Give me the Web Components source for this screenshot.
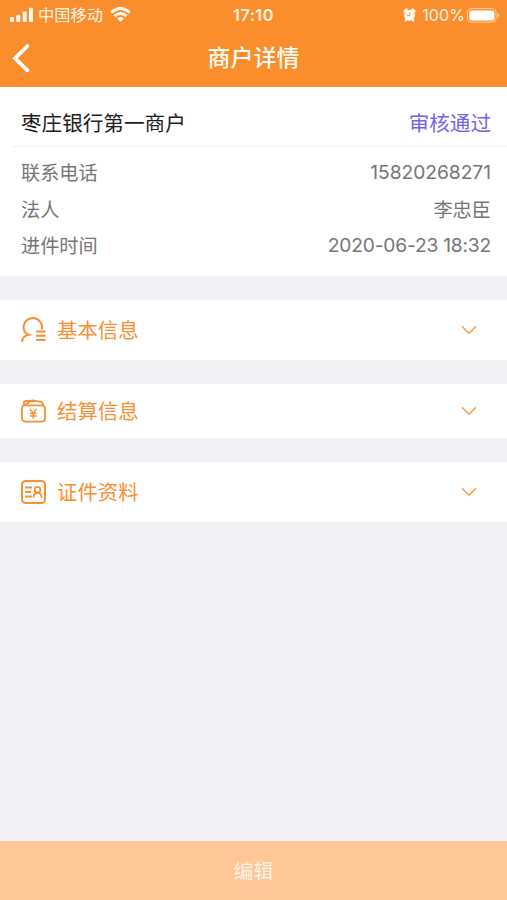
<!DOCTYPE html>
<html lang="zh-CN">
<head>
<meta charset="utf-8">
<title>商户详情</title>
<style>
html, body { margin: 0; height: 100%; }
body { font-family: Inter, "Noto Sans CJK SC", sans-serif; background: #f0f0f5; }
</style>
</head>
<body>
<merchant-page></merchant-page>
<script>
function define(name, html) {
  const template = document.createElement('template');
  template.innerHTML = html;
  customElements.define(name, class extends HTMLElement {
    constructor() {
      super();
      this.attachShadow({ mode: 'open' }).append(template.content.cloneNode(true));
    }
  });
}

define('status-bar', `
<style>
:host { display: grid; grid-template-columns: 1fr auto 1fr; align-items: center; height: 30px; color: #fff3e6; font-size: 16px; line-height: 30px; }
.side { display: flex; align-items: center; }
.left { padding-left: 10px; }
.right { justify-content: flex-end; padding-right: 7px; }
.carrier { margin: 0 7px 0 4px; font-size: 16.3px; white-space: nowrap; }
.time { font-weight: 600; font-size: 16.3px; letter-spacing: .45px; }
.pct { margin: 0 2px 0 6px; font-size: 16px; letter-spacing: .1px; }
svg { display: block; flex: none; }
</style>
<div class="side left">
  <svg width="24" height="16" viewBox="0 0 24 16" fill="#fff8ef"><rect x="0" y="10" width="4" height="5" rx="1"/><rect x="6.3" y="8" width="4" height="7" rx="1"/><rect x="12.7" y="4.5" width="4" height="10.5" rx="1"/><rect x="19" y="0.8" width="4" height="14.2" rx="1"/></svg>
  <span class="carrier">中国移动</span>
  <svg width="21" height="16" viewBox="0 0 21 16" fill="none" stroke="#fff8ef" stroke-width="2.9"><path d="M1.2 5.6Q10.5-2.6 19.8 5.6M4.6 9.2Q10.5 4 16.4 9.2"/><path d="M7.1 11.4Q10.5 8.5 13.9 11.4L10.5 15Z" fill="#fff8ef" stroke="none"/></svg>
</div>
<span class="time">17:10</span>
<div class="side right">
  <svg width="13" height="14" viewBox="0 0 13 14"><g stroke="#fff8ef" stroke-linecap="round"><path d="M1.8 3.2 3.4 1.8M9.6 1.8 11.2 3.2" stroke-width="2.8"/><path d="M2.6 12.6 3.8 11.2M10.4 12.6 9.2 11.2" stroke-width="1.8"/></g><circle cx="6.5" cy="7.3" r="5.5" fill="#fff8ef"/><path d="M6.8 4.4V7.6H4" fill="none" stroke="#fb8e2c" stroke-width=".9"/></svg>
  <span class="pct">100%</span>
  <svg width="33" height="15" viewBox="0 0 33 15"><rect x=".6" y=".6" width="28.5" height="13.5" rx="3.5" fill="none" stroke="#ffd0a0" stroke-width="1"/><rect x="2.4" y="2.4" width="25" height="10" rx="2" fill="#fff"/><path d="M30.5 5v5q1.7-.8 1.7-2.5T30.5 5Z" fill="#ffd0a0"/></svg>
</div>`);

define('nav-bar', `
<style>
:host { display: grid; grid-template-columns: 1fr auto 1fr; align-items: center; height: 57px; color: #fffaf2; }
svg { display: block; margin: -1px 0 0 11px; }
h1 { margin: 0; font-size: 23px; font-weight: 500; line-height: 57px; }
</style>
<svg width="20" height="30" viewBox="0 0 20 30" fill="none" stroke="#fff" stroke-width="3.8" stroke-linecap="round"><path d="M16.4 3 4 15.3 16.4 27.3"/></svg>
<h1><slot></slot></h1>`);

define('info-row', `
<style>
:host { display: flex; justify-content: space-between; align-items: center; height: 36.5px; padding: 0 16px 0 21px; font-size: 19.2px; color: #757575; }
</style>
<slot name="label"></slot><slot></slot>`);

define('merchant-card', `
<style>
:host { display: block; box-sizing: border-box; height: 189px; background: #fff; }
.head { display: flex; justify-content: space-between; align-items: center; box-sizing: border-box; height: 60px; padding: 11px 16px 0 9px; margin-left: 12px; border-bottom: 1px solid #f0f0f0; font-size: 20.6px; color: #1c1c1c; }
.state { color: #6e66ee; }
.rows { padding-top: 7px; }
</style>
<div class="head"><slot name="name"></slot><span class="state"><slot name="state"></slot></span></div>
<div class="rows"><slot></slot></div>`);

define('fold-section', `
<style>
:host { display: flex; align-items: center; box-sizing: border-box; height: 60px; padding: 0 29px 0 20px; background: #fff; color: #fa8f31; font-size: 20.4px; }
.text { flex: 1; margin: 0 0 2px 10px; }
::slotted(svg) { display: block; flex: none; }
svg { display: block; }
</style>
<slot name="icon"></slot>
<span class="text"><slot></slot></span>
<svg width="18" height="12" viewBox="0 0 18 12" fill="none" stroke="#f99c48" stroke-width="1.6"><path d="M2 2.2 9 9.2 16 2.2"/></svg>`);

define('action-bar', `
<style>
:host { display: flex; align-items: center; justify-content: center; height: 59px; background: #ffc697; color: #fff3e6; font-size: 20px; }
</style>
<slot></slot>`);

define('merchant-page', `
<style>
:host { display: flex; flex-direction: column; height: 900px; background: #f0f0f5; }
header { background: #fb8e2c; height: 87px; flex: none; }
main { flex: 1; display: flex; flex-direction: column; gap: 24px; }
.short { height: 54px; }
.phone { letter-spacing: -.02px; }
.date { letter-spacing: -.2px; }
</style>
<header><status-bar></status-bar><nav-bar>商户详情</nav-bar></header>
<main>
  <merchant-card>
    <span slot="name">枣庄银行第一商户</span><span slot="state">审核通过</span>
    <info-row><span slot="label">联系电话</span><span class="phone">15820268271</span></info-row>
    <info-row><span slot="label">法人</span><span>李忠臣</span></info-row>
    <info-row><span slot="label">进件时间</span><span class="date">2020-06-23 18:32</span></info-row>
  </merchant-card>
  <fold-section>
    <svg slot="icon" width="27" height="26" viewBox="0 0 27 26" fill="none" stroke="#f98f35" stroke-width="2"><path d="M21.8 12.4A9.2 9.2 0 1 0 4.6 14.4Q5.6 16.8 8.6 17.8Q2.6 19 2 24.8"/><path d="M16 14.4H25.6M16 18.7H25.6M16 23H25.6"/></svg>
    基本信息
  </fold-section>
  <fold-section class="short">
    <svg slot="icon" width="27" height="26" viewBox="0 0 27 26" fill="none" stroke="#f98f35" stroke-width="1.8"><rect x="2" y="7.4" width="23" height="16.2" rx="3"/><path d="M4 7.5V4.6Q4 3.2 5.6 3H15M5.5 6.8 10.8 2.8Q12 2.1 13.2 2.4L21.5 4.2Q23 4.7 23.2 7"/><path d="M10 11 13.3 15.2 16.6 11M13.3 15V20.6M10 15.5H16.6M10 18H16.6" stroke-width="1.4"/></svg>
    结算信息
  </fold-section>
  <fold-section>
    <svg slot="icon" width="27" height="26" viewBox="0 0 27 26" fill="none" stroke="#f98f35" stroke-width="2"><rect x="2" y="2" width="23" height="22" rx="3.5"/><g stroke-width="1.8"><path d="M5 8.5H12M5 13H11M5 17.5H12"/><circle cx="17.5" cy="10.8" r="2.9"/><path d="M13.4 18.6Q13.6 13.8 17.5 13.8T21.6 18.6"/></g></svg>
    证件资料
  </fold-section>
</main>
<action-bar>编辑</action-bar>`);
</script>
</body>
</html>
